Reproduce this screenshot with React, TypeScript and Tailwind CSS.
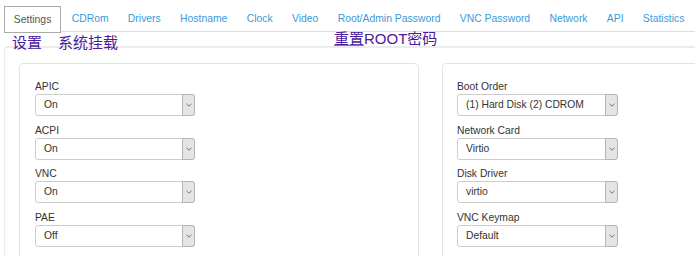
import React from "react";

const tabs = [
  "Settings",
  "CDRom",
  "Drivers",
  "Hostname",
  "Clock",
  "Video",
  "Root/Admin Password",
  "VNC Password",
  "Network",
  "API",
  "Statistics",
];

const leftFields = [
  { label: "APIC", value: "On" },
  { label: "ACPI", value: "On" },
  { label: "VNC", value: "On" },
  { label: "PAE", value: "Off" },
];

const rightFields = [
  { label: "Boot Order", value: "(1) Hard Disk (2) CDROM" },
  { label: "Network Card", value: "Virtio" },
  { label: "Disk Driver", value: "virtio" },
  { label: "VNC Keymap", value: "Default" },
];

function Field({ label, value }: { label: string; value: string }) {
  return (
    <div className="mb-[7.5px]">
      <div className="h-[13px] leading-[13px] mb-[1px] text-[10.3px] text-[#333]">{label}</div>
      <div className="flex h-[22px] border border-[#ccc] rounded-[3px] bg-white">
        <div className="flex-1 pl-[8px] flex items-center text-[10.3px] text-[#333]">{value}</div>
        <div className="w-[13px] -my-px -mr-px flex items-center justify-center bg-[#e4e4e4] border border-[#b5b5b5] rounded-r-[3px]">
          <svg width="6" height="4" viewBox="0 0 6 4">
            <path d="M0.5 0.8 L3 3.2 L5.5 0.8" fill="none" stroke="#666" strokeWidth="0.9" />
          </svg>
        </div>
      </div>
    </div>
  );
}

export default function App() {
  return (
    <div
      className="relative w-[695px] h-[256px] overflow-hidden bg-white"
      style={{ fontFamily: '"Liberation Sans", Arial, "Noto Sans CJK SC", sans-serif' }}
    >
      <div className="pt-[6px] pl-[4px]">
        <ul className="flex w-[900px] border-b border-[#ddd] h-[26px]">
          {tabs.map((t, i) => (
            <li
              key={t}
              className={
                i === 0
                  ? "h-[27px] px-[8.8px] mr-[1.7px] flex items-center text-[10.4px] text-[#555] border border-[#aaa] bg-white"
                  : "h-[26px] px-[8.8px] mr-[1.7px] flex items-center text-[10.4px] text-[#3a9ad9]"
              }
            >
              {t}
            </li>
          ))}
        </ul>

        <div className="mt-[14px] w-[900px] border-t-2 border-l border-[#ececec] rounded-tl-[4px] pt-[15px] pl-[14px] flex gap-[23px]">
          <div className="w-[400px] h-[220px] border border-[#e3e3e3] rounded-[4px] pt-[16px] pl-[15px]">
            <div className="w-[160px]">
              {leftFields.map((f) => (
                <Field key={f.label} {...f} />
              ))}
            </div>
          </div>
          <div className="w-[400px] h-[220px] border border-[#e3e3e3] rounded-[4px] pt-[16px] pl-[14px]">
            <div className="w-[161px]">
              {rightFields.map((f) => (
                <Field key={f.label} {...f} />
              ))}
            </div>
          </div>
        </div>
      </div>

      <div className="absolute left-[12px] top-[34px] text-[15px] leading-[18px] text-[#4b1a9e] flex gap-[16px]">
        <span>设置</span>
        <span>系统挂载</span>
      </div>
      <div className="absolute left-[334px] top-[30px] text-[15px] leading-[18px] text-[#4b1a9e]">
        <span className="underline decoration-[#8a6fc0]">重置</span>ROOT密码
      </div>
    </div>
  );
}
